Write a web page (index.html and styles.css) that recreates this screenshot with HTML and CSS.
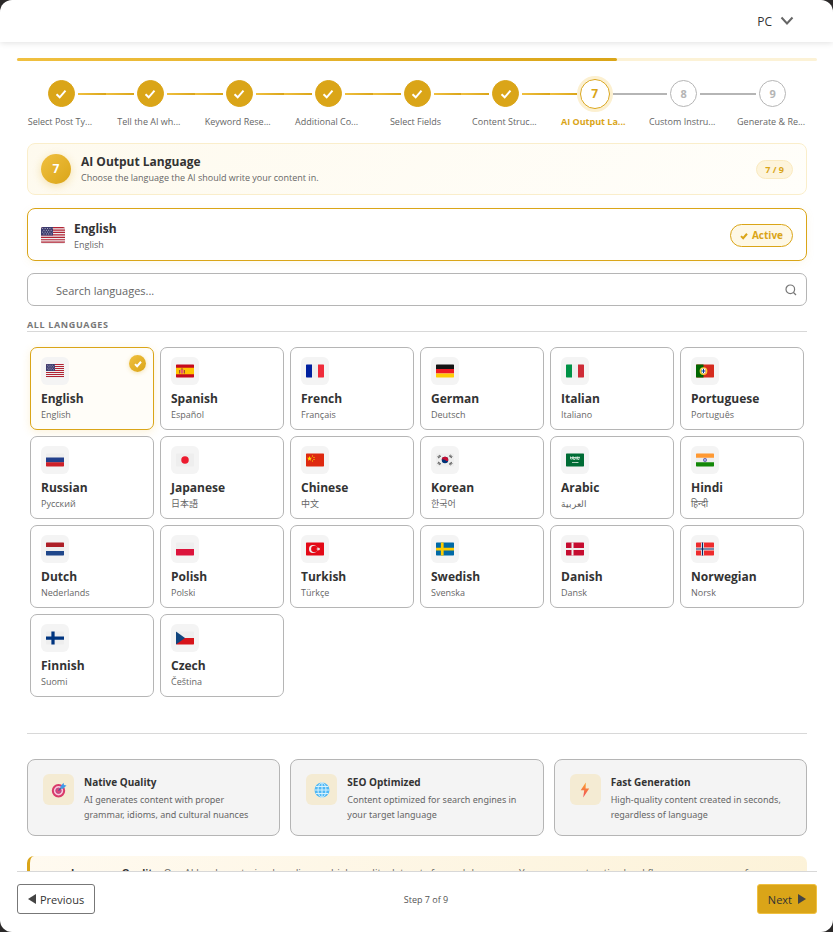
FILE: index.html
```html
<!DOCTYPE html>
<html lang="en">
<head>
    <meta charset="UTF-8">
    <meta name="viewport" content="width=device-width, initial-scale=1.0">
    <title>AI Output Language</title>
    <link rel="stylesheet" href="styles.css">
</head>
<body>

<!-- shared icons and flags -->
<svg class="sprite" aria-hidden="true">
    <symbol id="check" viewBox="0 0 12 12"><path d="M1.5 6.2 L4.7 9.3 L10.5 2.6" fill="none" stroke="currentColor" stroke-width="2"/></symbol>
    <symbol id="check-bold" viewBox="0 0 12 12"><path d="M1.5 6.2 L4.7 9.3 L10.5 2.6" fill="none" stroke="currentColor" stroke-width="3"/></symbol>
    <symbol id="us" viewBox="0 0 36 28" preserveAspectRatio="none">
        <path fill="#eee" d="M0 0h36v28H0z"/>
        <path stroke="#b22334" stroke-width="2" d="M0 1h36M0 5h36M0 9h36M0 13h36M0 17h36M0 21h36M0 25h36"/>
        <path fill="#3c3b6e" d="M0 0h18v14H0z"/>
        <path stroke="#fff" stroke-width="1.2" stroke-dasharray="1.2 2.4" d="M2 2.500h15M3.800 5.500h13M2 8.500h15M3.800 11.500h13"/>
    </symbol>
    <symbol id="es" viewBox="0 0 36 26"><path fill="#c60a1d" d="M0 0h36v26H0z"/><path fill="#ffc400" d="M0 6.500h36v13H0z"/><path fill="#ea596e" d="M9 10h6v7q-3 3-6 0z"/><path fill="#a1512b" d="M6 11h2v7H6zM16 11h2v7h-2zM10 8h4v2h-4z"/></symbol>
    <symbol id="fr" viewBox="0 0 36 26"><path fill="#eee" d="M0 0h36v26H0z"/><path fill="#00209f" d="M0 0h12v26H0z"/><path fill="#ef2b3a" d="M24 0h12v26H24z"/></symbol>
    <symbol id="de" viewBox="0 0 36 26"><path fill="#141414" d="M0 0h36v9H0z"/><path fill="#ed1c24" d="M0 9h36v9H0z"/><path fill="#ffcd05" d="M0 18h36v8H0z"/></symbol>
    <symbol id="it" viewBox="0 0 36 26"><path fill="#eee" d="M0 0h36v26H0z"/><path fill="#009246" d="M0 0h12v26H0z"/><path fill="#ce2b37" d="M24 0h12v26H24z"/></symbol>
    <symbol id="pt" viewBox="0 0 36 26"><path fill="#d52b1e" d="M0 0h36v26H0z"/><path fill="#060" d="M0 0h15v26H0z"/><circle cx="15" cy="13" r="6.500" fill="none" stroke="#fc3" stroke-width="2.500"/><path fill="#fff" d="M11 8h8v8q-4 5-8 0z"/><path stroke="#039" stroke-width="2" d="M15 9v8M12 13h6"/></symbol>
    <symbol id="ru" viewBox="0 0 36 26"><path fill="#eee" d="M0 0h36v9H0z"/><path fill="#22408c" d="M0 8h36v10H0z"/><path fill="#ce2028" d="M0 17.500h36V26H0z"/></symbol>
    <symbol id="jp" viewBox="0 0 36 26"><path fill="#eee" d="M0 0h36v26H0z"/><circle cx="18" cy="13" r="7.500" fill="#ed1b2f"/></symbol>
    <symbol id="cn" viewBox="0 0 36 26"><path fill="#de2910" d="M0 0h36v26H0z"/><path fill="#ffde02" d="M7 5l1.400 3.400 3.600.2-2.800 2.300 1 3.500L7 12.500l-3.200 1.900 1-3.500L2 8.600l3.600-.2z"/><path stroke="#ffde02" stroke-width="2" d="M12 5h2M15 8h2M15 12h2M12 15h2"/></symbol>
    <symbol id="kr" viewBox="0 0 36 26"><path fill="#eee" d="M0 0h36v26H0z"/><circle cx="18" cy="13" r="6.500" fill="#003478"/><path fill="#c60c30" d="M11.500 13a6.500 6.500 0 0 1 13 0c0 3-4 3-6.500 0-2.500-2-6-2-6.500 0z"/><path stroke="#444" stroke-width="4.500" stroke-dasharray="1.500 .8" d="M4 8l5-4M27 4l5 4M4 18l5 4M27 22l5-4"/></symbol>
    <symbol id="sa" viewBox="0 0 36 26"><path fill="#006c35" d="M0 0h36v26H0z"/><path fill="none" stroke="#d5e8dc" stroke-width="1.600" d="M9 6v5h4V6M15 6v6h3V7M20 6v5h3V6M26 6v6h-3M8 8h20M12 18h13M22 17v2"/></symbol>
    <symbol id="in" viewBox="0 0 36 26"><path fill="#eee" d="M0 0h36v26H0z"/><path fill="#ff9933" d="M0 0h36v8.500H0z"/><path fill="#138808" d="M0 17.500h36V26H0z"/><circle cx="18" cy="13" r="3.300" fill="#c5c5e5" stroke="#3a3a9c" stroke-width="1.200"/><circle cx="18" cy="13" r="1" fill="#3a3a9c"/></symbol>
    <symbol id="nl" viewBox="0 0 36 26"><path fill="#eee" d="M0 0h36v26H0z"/><path fill="#ae1f28" d="M0 0h36v9H0z"/><path fill="#20478b" d="M0 17h36v9H0z"/></symbol>
    <symbol id="pl" viewBox="0 0 36 26"><path fill="#eee" d="M0 0h36v13H0z"/><path fill="#dc143c" d="M0 13h36v13H0z"/></symbol>
    <symbol id="tr" viewBox="0 0 36 26"><path fill="#e30917" d="M0 0h36v26H0z"/><circle cx="14" cy="13" r="8" fill="#eee"/><circle cx="16.500" cy="13" r="6.300" fill="#e30917"/><path fill="#eee" d="M20 13l3-1 .5-3.500 2 2.800 3-1-1.800 2.700 1.800 2.700-3-1-2 2.800-.5-3.500z"/></symbol>
    <symbol id="se" viewBox="0 0 36 26"><path fill="#006aa7" d="M0 0h36v26H0z"/><path stroke="#fecc00" stroke-width="5.500" d="M12.500 0v26M0 13h36"/></symbol>
    <symbol id="dk" viewBox="0 0 36 26"><path fill="#c60c30" d="M0 0h36v26H0z"/><path stroke="#eee" stroke-width="4" d="M13 0v26M0 13h36"/></symbol>
    <symbol id="no" viewBox="0 0 36 26"><path fill="#ef2b2d" d="M0 0h36v26H0z"/><path stroke="#eee" stroke-width="6" d="M13 0v26M0 13h36"/><path stroke="#002868" stroke-width="2.400" d="M13 0v26M0 13h36"/></symbol>
    <symbol id="fi" viewBox="0 0 36 26"><path fill="#eee" d="M0 0h36v26H0z"/><path stroke="#003580" stroke-width="6.500" d="M14 0v26M0 13h36"/></symbol>
    <symbol id="cz" viewBox="0 0 36 26"><path fill="#eee" d="M0 0h36v13H0z"/><path fill="#d7141a" d="M0 13h36v13H0z"/><path fill="#11457e" d="M0 0l18 13L0 26z"/></symbol>
</svg>

<div class="dialog">
    <header class="top">
        <button class="device" type="button">PC
            <svg width="14" height="10" viewBox="0 0 14 10"><path d="M1.500 1.500 L7 7.500 L12.500 1.500" fill="none" stroke="#666" stroke-width="2"/></svg>
        </button>
    </header>

    <main class="content">
        <div class="progress"><div class="bar"></div></div>

        <ol class="steps">
            <li class="step done"><span class="dot"><svg><use href="#check"/></svg></span><span class="label">Select Post Ty...</span></li>
            <li class="step done"><span class="dot"><svg><use href="#check"/></svg></span><span class="label">Tell the AI wh...</span></li>
            <li class="step done"><span class="dot"><svg><use href="#check"/></svg></span><span class="label">Keyword Rese...</span></li>
            <li class="step done"><span class="dot"><svg><use href="#check"/></svg></span><span class="label">Additional Co...</span></li>
            <li class="step done"><span class="dot"><svg><use href="#check"/></svg></span><span class="label">Select Fields</span></li>
            <li class="step done"><span class="dot"><svg><use href="#check"/></svg></span><span class="label">Content Struc...</span></li>
            <li class="step current"><span class="dot">7</span><span class="label">AI Output La...</span></li>
            <li class="step"><span class="dot">8</span><span class="label">Custom Instru...</span></li>
            <li class="step"><span class="dot">9</span><span class="label">Generate &amp; Re...</span></li>
        </ol>

        <div class="panel">
            <section class="banner">
                <span class="banner-num">7</span>
                <div class="grow">
                    <h1 class="title">AI Output Language</h1>
                    <p class="sub">Choose the language the AI should write your content in.</p>
                </div>
                <span class="count">7 / 9</span>
            </section>

            <section class="selected">
                <svg class="flag-big"><use href="#us"/></svg>
                <div class="grow">
                    <h2 class="title">English</h2>
                    <p class="sub">English</p>
                </div>
                <span class="active"><svg><use href="#check-bold"/></svg>Active</span>
            </section>

            <div class="search">
                <input type="text" placeholder="Search languages..." aria-label="Search languages">
                <svg width="12" height="12" viewBox="0 0 12 12"><circle cx="5.300" cy="5.300" r="4.300" fill="none" stroke="#777" stroke-width="1.200"/><path d="M8.500 8.500 L11 11" stroke="#777" stroke-width="1.200"/></svg>
            </div>

            <h3 class="all">All languages</h3>

            <div class="grid">
                <button type="button" class="lang chosen"><span class="flag"><svg><use href="#us"/></svg></span><span class="name">English</span><span class="native">English</span><span class="tick"><svg><use href="#check-bold"/></svg></span></button>
                <button type="button" class="lang"><span class="flag"><svg><use href="#es"/></svg></span><span class="name">Spanish</span><span class="native">Español</span></button>
                <button type="button" class="lang"><span class="flag"><svg><use href="#fr"/></svg></span><span class="name">French</span><span class="native">Français</span></button>
                <button type="button" class="lang"><span class="flag"><svg><use href="#de"/></svg></span><span class="name">German</span><span class="native">Deutsch</span></button>
                <button type="button" class="lang"><span class="flag"><svg><use href="#it"/></svg></span><span class="name">Italian</span><span class="native">Italiano</span></button>
                <button type="button" class="lang"><span class="flag"><svg><use href="#pt"/></svg></span><span class="name">Portuguese</span><span class="native">Português</span></button>
                <button type="button" class="lang"><span class="flag"><svg><use href="#ru"/></svg></span><span class="name">Russian</span><span class="native">Русский</span></button>
                <button type="button" class="lang"><span class="flag"><svg><use href="#jp"/></svg></span><span class="name">Japanese</span><span class="native" lang="ja">日本語</span></button>
                <button type="button" class="lang"><span class="flag"><svg><use href="#cn"/></svg></span><span class="name">Chinese</span><span class="native" lang="zh">中文</span></button>
                <button type="button" class="lang"><span class="flag"><svg><use href="#kr"/></svg></span><span class="name">Korean</span><span class="native" lang="ko">한국어</span></button>
                <button type="button" class="lang"><span class="flag"><svg><use href="#sa"/></svg></span><span class="name">Arabic</span><span class="native" lang="ar">العربية</span></button>
                <button type="button" class="lang"><span class="flag"><svg><use href="#in"/></svg></span><span class="name">Hindi</span><span class="native" lang="hi">हिन्दी</span></button>
                <button type="button" class="lang"><span class="flag"><svg><use href="#nl"/></svg></span><span class="name">Dutch</span><span class="native">Nederlands</span></button>
                <button type="button" class="lang"><span class="flag"><svg><use href="#pl"/></svg></span><span class="name">Polish</span><span class="native">Polski</span></button>
                <button type="button" class="lang"><span class="flag"><svg><use href="#tr"/></svg></span><span class="name">Turkish</span><span class="native">Türkçe</span></button>
                <button type="button" class="lang"><span class="flag"><svg><use href="#se"/></svg></span><span class="name">Swedish</span><span class="native">Svenska</span></button>
                <button type="button" class="lang"><span class="flag"><svg><use href="#dk"/></svg></span><span class="name">Danish</span><span class="native">Dansk</span></button>
                <button type="button" class="lang"><span class="flag"><svg><use href="#no"/></svg></span><span class="name">Norwegian</span><span class="native">Norsk</span></button>
                <button type="button" class="lang"><span class="flag"><svg><use href="#fi"/></svg></span><span class="name">Finnish</span><span class="native">Suomi</span></button>
                <button type="button" class="lang"><span class="flag"><svg><use href="#cz"/></svg></span><span class="name">Czech</span><span class="native">Čeština</span></button>
            </div>

            <section class="infos">
                <div class="info">
                    <span class="info-icon"><svg width="16" height="16" viewBox="0 0 16 16"><circle cx="7.500" cy="8.700" r="5.700" fill="#f9c6d9" stroke="#d93a6a" stroke-width="2"/><circle cx="7.500" cy="8.700" r="2.700" fill="#e04577" stroke="#b04a8a" stroke-width="1"/><path d="M7.500 8.700 L12 4" stroke="#4a5a9a" stroke-width="1.200"/><path fill="#3f9ae8" d="M9.500 4.500 L12.500 .8 L13 3 L15.500 3.600 L12 6.700 L9.600 6.600z"/></svg></span>
                    <div>
                        <h4 class="info-title">Native Quality</h4>
                        <p class="info-text">AI generates content with proper grammar, idioms, and cultural nuances</p>
                    </div>
                </div>
                <div class="info">
                    <span class="info-icon"><svg width="16" height="16" viewBox="0 0 16 16"><circle cx="8" cy="8" r="7.500" fill="#50b8f5"/><path fill="none" stroke="#d5f2fd" stroke-width="1" d="M8 .5v15M.5 8h15M1.800 4.500h12.400M1.800 11.500h12.400"/><ellipse cx="8" cy="8" rx="4" ry="7.300" fill="none" stroke="#d5f2fd" stroke-width="1"/></svg></span>
                    <div>
                        <h4 class="info-title">SEO Optimized</h4>
                        <p class="info-text">Content optimized for search engines in your target language</p>
                    </div>
                </div>
                <div class="info">
                    <span class="info-icon"><svg width="16" height="16" viewBox="0 0 16 16"><defs><linearGradient id="bolt" x1="0" y1="0" x2="0" y2="1"><stop offset="0" stop-color="#fba52c"/><stop offset="1" stop-color="#f04a5c"/></linearGradient></defs><path fill="url(#bolt)" d="M8.800 .6 L3.700 8.300 H7.200 L6.200 15.400 L12.200 6.600 H8.600z"/></svg></span>
                    <div>
                        <h4 class="info-title">Fast Generation</h4>
                        <p class="info-text">High-quality content created in seconds, regardless of language</p>
                    </div>
                </div>
            </section>

            <p class="note"><b>Language Quality:</b> Our AI has been trained on diverse, high-quality datasets for each language. You can expect native-level fluency across areas for</p>
        </div>
    </main>

    <footer class="bottom">
        <button type="button" class="btn"><svg width="8" height="10" viewBox="0 0 8 10"><path d="M8 0v10L0 5z" fill="#444"/></svg>Previous</button>
        <span class="where">Step 7 of 9</span>
        <button type="button" class="btn next">Next<svg width="8" height="10" viewBox="0 0 8 10"><path d="M0 0v10l8-5z" fill="#444"/></svg></button>
    </footer>
</div>

</body>
</html>
```
FILE: styles.css
```css
*{
    box-sizing: border-box;
}
body{
    margin: 0;
    background-color: #2b2929;
    font-family: "Open Sans", "Noto Sans", "Noto Sans CJK JP", "Noto Sans CJK KR", sans-serif;
    color: #333;
}
h1, h2, h3, h4, p, ol{
    margin: 0;
    padding: 0;
}
button, input{
    font-family: inherit;
    color: inherit;
}
.sprite{
    display: none;
}
.dialog{
    height: 100vh;
    display: flex;
    flex-direction: column;
    background-color: white;
    border-radius: 12px;
    overflow: hidden;
}
.grow{
    flex: 1;
}

/* top bar */
.top{
    flex: none;
    display: flex;
    justify-content: flex-end;
    align-items: center;
    height: 42px;
    padding: 0 39px;
    box-shadow: 0 1px 6px rgba(0,0,0,0.12);
}
.device{
    display: flex;
    align-items: center;
    gap: 8px;
    padding: 0;
    border: none;
    background: none;
    font-size: 12px;
}

.content{
    flex: 1;
    min-height: 0;
    overflow: hidden;
    padding: 16px 16px 0 17px;
}
.progress{
    height: 3px;
    border-radius: 2px;
    background-color: #fcf2d6;
}
.bar{
    width: 75%;
    height: 3px;
    border-radius: 2px;
    background: linear-gradient(90deg, #f0c040, #daa518);
}

/* steps */
.steps{
    display: flex;
    list-style: none;
    padding-top: 17px;
}
.step{
    flex: 1;
    min-width: 0;
    display: grid;
    grid-template-columns: 1fr auto 1fr;
    grid-template-rows: 31px auto;
    column-gap: 3px;
    row-gap: 6px;
    align-items: center;
}
.step::before, .step::after{
    content: "";
    height: 2px;
    grid-row: 1;
    background-color: #b5b5b5;
}
.step::after{
    grid-column: 3;
}
.step:first-child::before, .step:last-child::after{
    visibility: hidden;
}
.done::before, .done::after, .current::before{
    background: linear-gradient(90deg, #f0c040, #daa518);
}
.dot{
    grid-row: 1;
    grid-column: 2;
    display: flex;
    align-items: center;
    justify-content: center;
    width: 27px;
    height: 27px;
    border: 1px solid #b5b5b5;
    border-radius: 50%;
    font-size: 11px;
    font-weight: bold;
    color: #b5b5b5;
}
.dot svg{
    width: 12px;
    height: 12px;
}
.done .dot{
    background-color: #daa518;
    border-color: #daa518;
    color: white;
}
.current .dot{
    width: 30px;
    height: 30px;
    border-color: #daa518;
    color: #daa518;
    font-size: 12px;
    box-shadow: 0 0 0 3px #fcf0d0;
}
.label{
    grid-row: 2;
    grid-column: 1 / 4;
    padding-right: 3px;
    text-align: center;
    white-space: nowrap;
    font-size: 9px;
    line-height: 14px;
    color: #666;
}
.current .label{
    font-weight: bold;
    color: #daa518;
}

.panel{
    padding: 14px 10px 0;
}
.banner{
    display: flex;
    align-items: center;
    gap: 10px;
    height: 52px;
    padding: 0 13px;
    border: 1px solid #faeecb;
    border-radius: 8px;
    background: linear-gradient(135deg, #fefaee, #fffefa);
}
.banner-num{
    width: 30px;
    height: 30px;
    border-radius: 50%;
    background: linear-gradient(135deg, #f0c040, #daa518);
    box-shadow: 0 2px 8px rgba(218,165,24,0.3);
    color: white;
    font-size: 12px;
    font-weight: bold;
    line-height: 30px;
    text-align: center;
}
.title{
    font-size: 12px;
    line-height: 17px;
}
.sub{
    font-size: 9px;
    line-height: 15px;
    color: #666;
}
.count{
    padding: 0 8px;
    border: 1px solid #faeac0;
    border-radius: 10px;
    background-color: #fdf4dc;
    color: #daa518;
    font-size: 9px;
    font-weight: bold;
    line-height: 17px;
}

.selected{
    display: flex;
    align-items: center;
    gap: 9px;
    height: 53px;
    margin-top: 13px;
    padding: 2px 13px 0;
    border: 1px solid #daa518;
    border-radius: 8px;
    box-shadow: 0 2px 8px rgba(218,165,24,0.08);
}
.flag-big{
    width: 24px;
    height: 17px;
    border-radius: 2px;
}
.active{
    display: flex;
    align-items: center;
    gap: 4px;
    padding: 0 9px;
    border: 1px solid #daa518;
    border-radius: 12px;
    background-color: #fef8e6;
    color: #daa518;
    font-size: 10px;
    font-weight: bold;
    line-height: 21px;
}
.active svg{
    width: 8px;
    height: 8px;
}

.search{
    display: flex;
    align-items: center;
    height: 33px;
    margin-top: 12px;
    padding: 0 9px 0 28px;
    border: 1px solid #b5b5b5;
    border-radius: 7px;
}
.search input{
    flex: 1;
    padding: 2px 0 0;
    border: none;
    outline: none;
    background: none;
    font-size: 11px;
}
.search input::placeholder{
    color: #666;
}

.all{
    margin-top: 12px;
    border-bottom: 1px solid #d8d8d8;
    font-size: 9px;
    line-height: 13px;
    letter-spacing: 0.07em;
    text-transform: uppercase;
    color: #777;
}

/* language cards */
.grid{
    display: grid;
    grid-template-columns: repeat(6, 1fr);
    gap: 6px;
    padding: 15px 3px 36px;
    border-bottom: 1px solid #d8d8d8;
}
.lang{
    position: relative;
    display: flex;
    flex-direction: column;
    align-items: flex-start;
    height: 83px;
    padding: 9px 10px;
    border: 1px solid #b5b5b5;
    border-radius: 7px;
    background-color: white;
    text-align: left;
}
.chosen{
    border-color: #daa518;
    background-color: #fffdf8;
    box-shadow: 0 2px 8px rgba(240,192,64,0.2);
}
.flag{
    flex: none;
    display: flex;
    align-items: center;
    justify-content: center;
    width: 28px;
    height: 28px;
    border-radius: 6px;
    background-color: #f4f4f4;
}
.flag svg{
    width: 18px;
    height: 14px;
    border-radius: 1px;
}
.name{
    margin-top: 5px;
    font-size: 12px;
    font-weight: bold;
    line-height: 17px;
}
.native{
    margin-top: 1px;
    font-size: 9px;
    line-height: 14px;
    color: #666;
}
.tick{
    position: absolute;
    top: 7px;
    right: 7px;
    display: flex;
    align-items: center;
    justify-content: center;
    width: 17px;
    height: 17px;
    border-radius: 50%;
    background: linear-gradient(135deg, #f0c040, #daa518);
    box-shadow: 0 1px 4px rgba(218,165,24,0.3);
    color: white;
}
.tick svg{
    width: 8px;
    height: 8px;
}

/* info cards */
.infos{
    display: grid;
    grid-template-columns: repeat(3, 1fr);
    gap: 10px;
    margin-top: 25px;
}
.info{
    display: flex;
    gap: 10px;
    padding: 14px 14px 13px 15px;
    border: 1px solid #b5b5b5;
    border-radius: 8px;
    background-color: #f4f4f4;
}
.info-icon{
    flex: none;
    display: flex;
    align-items: center;
    justify-content: center;
    width: 31px;
    height: 31px;
    border-radius: 6px;
    background-color: #f4ebd3;
}
.info-title{
    font-size: 10px;
    line-height: 16px;
}
.info-text{
    margin-top: 2px;
    font-family: "Noto Sans", sans-serif;
    font-size: 9px;
    line-height: 15px;
    color: #666;
}
.note{
    margin-top: 20px;
    padding: 9px 12px 12px 41px;
    border-left: 3px solid #daa518;
    border-radius: 7px;
    background: linear-gradient(135deg, #fffaf0, #fcf2d8);
    font-size: 10px;
    line-height: 16px;
    color: #666;
}
.note b{
    color: #333;
}

/* footer */
.bottom{
    flex: none;
    display: flex;
    align-items: center;
    justify-content: space-between;
    margin: 0 16px 0 17px;
    padding: 12px 0 18px;
    border-top: 1px solid #d8d8d8;
}
.btn{
    display: flex;
    align-items: center;
    gap: 4px;
    height: 30px;
    padding: 0 10px;
    border: 1px solid #777;
    border-radius: 3px;
    background-color: white;
    font-size: 11px;
}
.next{
    gap: 6px;
    border-color: #f0c040;
    background-color: #daa518;
}
.where{
    font-size: 9px;
    color: #555;
}
```
